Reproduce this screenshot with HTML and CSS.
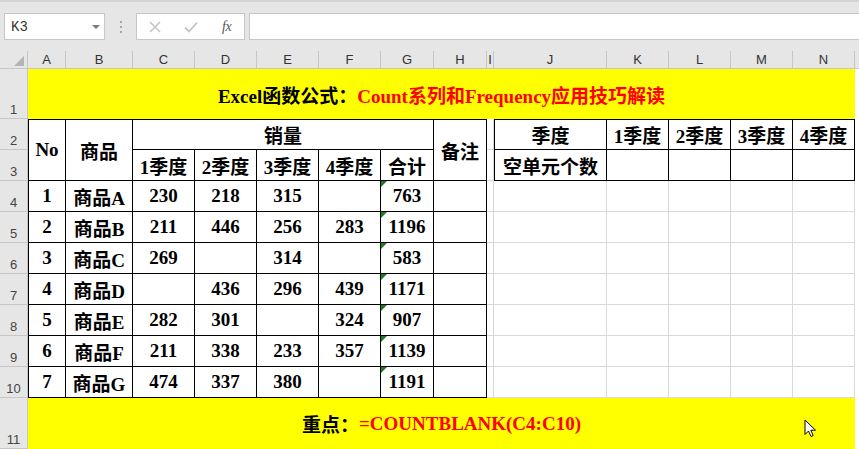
FILE: index.html
```html
<!DOCTYPE html>
<html lang="zh-CN">
<head>
<meta charset="utf-8">
<title>Excel</title>
<link rel="stylesheet" href="styles.css">
</head>
<body>
<div class="toolbar">
  <div class="namebox"><span class="nb-text">K3</span><span class="nb-arrow"></span></div>
  <div class="dots"><i></i><i></i><i></i></div>
  <div class="fbtns">
    <svg class="ic-x" width="12" height="12" viewBox="0 0 12 12"><path d="M1 1 L11 11 M11 1 L1 11" stroke="#c4c4c4" stroke-width="1.6" fill="none"/></svg>
    <svg class="ic-ok" width="14" height="12" viewBox="0 0 14 12"><path d="M1 6.5 L5 10.5 L13 1.5" stroke="#c4c4c4" stroke-width="1.8" fill="none"/></svg>
    <span class="fx">fx</span>
  </div>
  <div class="finput"></div>
</div>
<div class="sheet">
  <div class="corner"><span class="tri"></span></div>
  <div class="ch">A</div><div class="ch">B</div><div class="ch">C</div><div class="ch">D</div><div class="ch">E</div><div class="ch">F</div><div class="ch">G</div><div class="ch">H</div><div class="ch">I</div><div class="ch">J</div><div class="ch">K</div><div class="ch">L</div><div class="ch">M</div><div class="ch">N</div><div class="ch last"></div>

  <div class="rh">1</div>
  <div class="y c14"><span class="blk">Excel函数公式：</span><span class="red">Count系列和Frequency应用技巧解读</span></div>
  <div class="x"></div>

  <div class="rh">2</div>
  <div class="c k t l r2">No</div>
  <div class="c k t r2">商品</div>
  <div class="c k t c5">销量</div>
  <div class="c k t r2">备注</div>
  <div class="c"></div>
  <div class="c k t l">季度</div><div class="c k t">1季度</div><div class="c k t">2季度</div><div class="c k t">3季度</div><div class="c k t">4季度</div>
  <div class="x"></div>

  <div class="rh">3</div>
  <div class="c k">1季度</div><div class="c k">2季度</div><div class="c k">3季度</div><div class="c k">4季度</div><div class="c k">合计</div>
  <div class="c"></div>
  <div class="c k l">空单元个数</div><div class="c k"></div><div class="c k"></div><div class="c k"></div><div class="c k"></div>
  <div class="x"></div>

  <div class="rh">4</div>
  <div class="c k l">1</div><div class="c k">商品A</div><div class="c k">230</div><div class="c k">218</div><div class="c k">315</div><div class="c k"></div><div class="c k e">763</div><div class="c k"></div>
  <div class="c"></div><div class="c"></div><div class="c"></div><div class="c"></div><div class="c"></div><div class="c"></div><div class="x"></div>

  <div class="rh">5</div>
  <div class="c k l">2</div><div class="c k">商品B</div><div class="c k">211</div><div class="c k">446</div><div class="c k">256</div><div class="c k">283</div><div class="c k e">1196</div><div class="c k"></div>
  <div class="c"></div><div class="c"></div><div class="c"></div><div class="c"></div><div class="c"></div><div class="c"></div><div class="x"></div>

  <div class="rh">6</div>
  <div class="c k l">3</div><div class="c k">商品C</div><div class="c k">269</div><div class="c k"></div><div class="c k">314</div><div class="c k"></div><div class="c k e">583</div><div class="c k"></div>
  <div class="c"></div><div class="c"></div><div class="c"></div><div class="c"></div><div class="c"></div><div class="c"></div><div class="x"></div>

  <div class="rh">7</div>
  <div class="c k l">4</div><div class="c k">商品D</div><div class="c k"></div><div class="c k">436</div><div class="c k">296</div><div class="c k">439</div><div class="c k e">1171</div><div class="c k"></div>
  <div class="c"></div><div class="c"></div><div class="c"></div><div class="c"></div><div class="c"></div><div class="c"></div><div class="x"></div>

  <div class="rh">8</div>
  <div class="c k l">5</div><div class="c k">商品E</div><div class="c k">282</div><div class="c k">301</div><div class="c k"></div><div class="c k">324</div><div class="c k e">907</div><div class="c k"></div>
  <div class="c"></div><div class="c"></div><div class="c"></div><div class="c"></div><div class="c"></div><div class="c"></div><div class="x"></div>

  <div class="rh">9</div>
  <div class="c k l">6</div><div class="c k">商品F</div><div class="c k">211</div><div class="c k">338</div><div class="c k">233</div><div class="c k">357</div><div class="c k e">1139</div><div class="c k"></div>
  <div class="c"></div><div class="c"></div><div class="c"></div><div class="c"></div><div class="c"></div><div class="c"></div><div class="x"></div>

  <div class="rh">10</div>
  <div class="c k l">7</div><div class="c k">商品G</div><div class="c k">474</div><div class="c k">337</div><div class="c k">380</div><div class="c k"></div><div class="c k e">1191</div><div class="c k"></div>
  <div class="c"></div><div class="c"></div><div class="c"></div><div class="c"></div><div class="c"></div><div class="c"></div><div class="x"></div>

  <div class="rh">11</div>
  <div class="y c14"><span class="blk">重点：</span><span class="red">=COUNTBLANK(C4:C10)</span></div>
  <div class="x"></div>
</div>
<svg class="cursor" width="13" height="19" viewBox="0 0 13 19"><path d="M1 1 L1 15.5 L4.5 12 L7 17.5 L9.2 16.5 L6.8 11.2 L11.5 11.2 Z" fill="#fff" stroke="#000" stroke-width="1" stroke-linejoin="miter"/></svg>
</body>
</html>
```
FILE: styles.css
```css
html, body {
  margin: 0;
  padding: 0;
}
body {
  width: 859px;
  height: 449px;
  overflow: hidden;
  background: #fff;
  position: relative;
  font-family: "Liberation Sans", Arial, sans-serif;
}
.toolbar {
  height: 51px;
  box-sizing: border-box;
  background: #e6e6e6;
  border-top: 2px solid #d4d4d4;
  padding-top: 11px;
  display: flex;
  align-items: flex-start;
}
.namebox {
  margin-left: 4px;
  width: 101px;
  height: 27px;
  box-sizing: border-box;
  border: 1px solid #c6c6c6;
  background: #fff;
  display: flex;
  align-items: center;
  justify-content: space-between;
  padding: 0 4px 0 6px;
}
.nb-text {
  font-family: "Liberation Mono", monospace;
  font-size: 14px;
  color: #333;
}
.nb-arrow {
  width: 0;
  height: 0;
  border-left: 4px solid transparent;
  border-right: 4px solid transparent;
  border-top: 4px solid #7a7a7a;
}
.dots {
  margin-left: 14px;
  width: 4px;
  height: 27px;
  display: flex;
  flex-direction: column;
  align-items: center;
  justify-content: center;
  gap: 3px;
}
.dots i {
  display: block;
  width: 2px;
  height: 2px;
  background: #a8a8a8;
}
.fbtns {
  margin-left: 13px;
  width: 109px;
  height: 27px;
  box-sizing: border-box;
  border: 1px solid #c6c6c6;
  background: #fff;
  display: flex;
  align-items: center;
  padding-left: 12px;
}
.ic-x { margin-right: 23px; }
.ic-ok { margin-right: 24px; }
.fx {
  font-family: "Liberation Serif", serif;
  font-style: italic;
  font-size: 14px;
  color: #555;
  letter-spacing: -0.5px;
}
.finput {
  margin-left: 4px;
  flex: 1;
  height: 27px;
  box-sizing: border-box;
  border: 1px solid #c6c6c6;
  border-right: none;
  background: #fff;
}
.sheet {
  display: grid;
  grid-template-columns: 28px 38px 67px 62px 62px 62px 62px 53px 53px 7px 113px 62px 62px 62px 62px 1fr;
  grid-template-rows: 18px 50px repeat(9, 31px) 51px;
}
.sheet > div {
  box-sizing: border-box;
  min-width: 0;
}
.corner {
  background: #e6e6e6;
  border-right: 1px solid #c6c6c6;
  border-bottom: 1px solid #c6c6c6;
  position: relative;
}
.tri {
  position: absolute;
  right: 3px;
  bottom: 2px;
  width: 0;
  height: 0;
  border-left: 10px solid transparent;
  border-bottom: 10px solid #b4b4b4;
}
.ch {
  background: #e6e6e6;
  border-right: 1px solid #c6c6c6;
  border-bottom: 1px solid #c6c6c6;
  display: flex;
  align-items: flex-end;
  justify-content: center;
  font-size: 13px;
  line-height: 15px;
  color: #333;
  padding-bottom: 1px;
}
.ch.last { border-right: none; }
.rh {
  background: #e6e6e6;
  border-right: 1px solid #c6c6c6;
  border-bottom: 1px solid #c6c6c6;
  display: flex;
  align-items: flex-end;
  justify-content: center;
  font-size: 13px;
  line-height: 15px;
  color: #444;
  padding-bottom: 1px;
}
.c {
  display: flex;
  align-items: center;
  justify-content: center;
  border-right: 1px solid #d9d9d9;
  border-bottom: 1px solid #d9d9d9;
  font-family: "Liberation Serif", "Noto Sans CJK SC", serif;
  font-weight: bold;
  font-size: 19px;
  color: #000;
  white-space: nowrap;
  position: relative;
}
.k {
  border-right-color: #000;
  border-bottom-color: #000;
}
.t { border-top: 1px solid #000; }
.l { border-left: 1px solid #000; }
.r2 { grid-row: span 2; }
.c5 { grid-column: span 5; }
.c14 { grid-column: span 14; }
.y {
  background: #ffff00;
  display: flex;
  align-items: center;
  justify-content: center;
  font-family: "Liberation Serif", "Noto Sans CJK SC", serif;
  font-weight: bold;
  font-size: 19px;
  white-space: nowrap;
}
.blk { color: #000; }
.red { color: #ff0000; }
.x { background: #fff; }
.e::before {
  content: "";
  position: absolute;
  top: 0;
  left: 0;
  width: 0;
  height: 0;
  border-top: 6px solid #1e7b1e;
  border-right: 6px solid transparent;
}
.cursor {
  position: absolute;
  left: 804px;
  top: 419px;
}
```
